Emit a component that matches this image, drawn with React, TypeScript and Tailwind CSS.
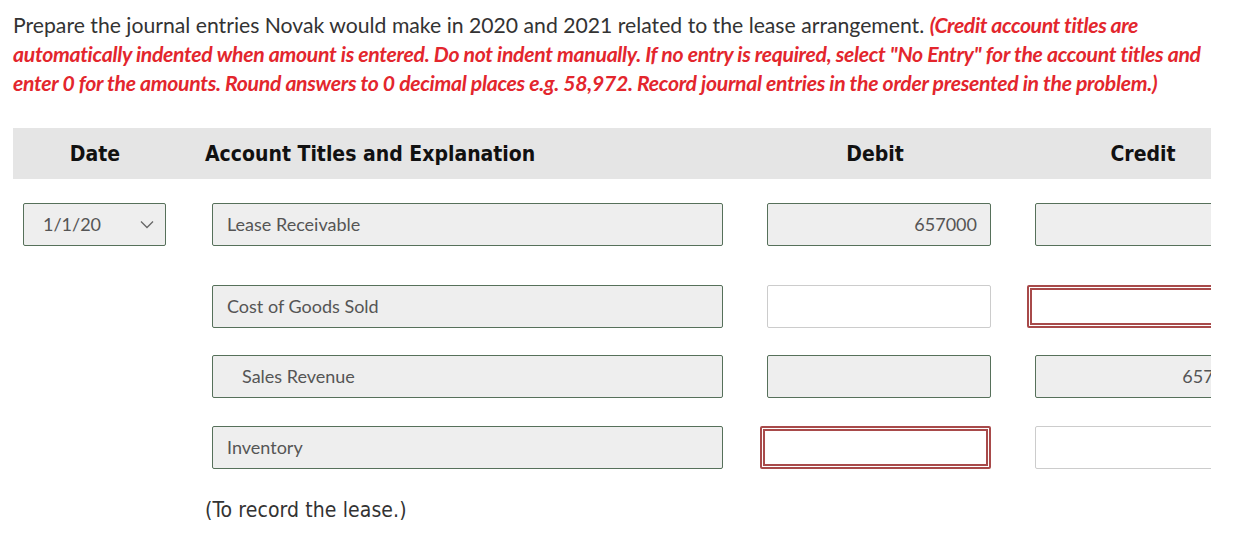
import React from 'react'

type Cell = { kind: 'filled' | 'empty' | 'error'; value?: string }

interface Row {
	date?: string
	account: string
	indent?: boolean
	debit: Cell
	credit: Cell
	top: string
}

const rows: Row[] = [
	{
		date: '1/1/20',
		account: 'Lease Receivable',
		debit: { kind: 'filled', value: '657000' },
		credit: { kind: 'filled' },
		top: 'mt-[24px]',
	},
	{
		account: 'Cost of Goods Sold',
		debit: { kind: 'empty' },
		credit: { kind: 'error' },
		top: 'mt-[39px]',
	},
	{
		account: 'Sales Revenue',
		indent: true,
		debit: { kind: 'filled' },
		credit: { kind: 'filled', value: '657000' },
		top: 'mt-[27px]',
	},
	{
		account: 'Inventory',
		debit: { kind: 'error' },
		credit: { kind: 'empty' },
		top: 'mt-[28px]',
	},
]

const AmountBox: React.FC<{ cell: Cell; gap: string; gapError: string }> = ({
	cell,
	gap,
	gapError,
}) => {
	if (cell.kind === 'error') {
		return (
			<div
				className={`${gapError} h-[43px] w-[231px] shrink-0 rounded-[2px] border-[5px] border-double border-[#a84a4a] bg-white`}
			/>
		)
	}
	if (cell.kind === 'empty') {
		return (
			<div
				className={`${gap} h-[43px] w-[224px] shrink-0 rounded-[2px] border border-[#cccccc] bg-white`}
			/>
		)
	}
	return (
		<div
			className={`${gap} flex h-[43px] w-[224px] shrink-0 items-center justify-end rounded-[2px] border border-[#56705a] bg-[#eeeeee] pr-[13px] text-[18px] text-[#555555]`}
		>
			{cell.value}
		</div>
	)
}

const App: React.FC = () => {
	return (
		<div className="h-[542px] w-[1244px] overflow-hidden bg-white font-['Lato',sans-serif]">
			<p className="whitespace-nowrap pl-[13px] pt-[11px] text-[21.2px] leading-[29px] text-[#333333]">
				Prepare the journal entries Novak would make in 2020 and 2021 related
				to the lease arrangement.{' '}
				<span className="font-bold italic tracking-[-0.4px] text-[#e3262d]">
					(Credit account titles are
				</span>
				<br />
				<span className="font-bold italic tracking-[-0.3px] text-[#e3262d]">
					automatically indented when amount is entered. Do not indent manually.
					If no entry is required, select "No Entry" for the account titles and
					<br />
					enter 0 for the amounts. Round answers to 0 decimal places e.g.
					58,972. Record journal entries in the order presented in the problem.)
				</span>
			</p>

			<div className="ml-[13px] mt-[30px] w-[1198px] overflow-hidden">
				{/* header */}
				<div className="flex h-[51px] items-center bg-[#e5e5e5] pt-[2px] font-['DejaVu_Sans_Condensed','DejaVu_Sans',sans-serif] text-[21px] font-bold text-[#111111]">
					<div className="w-[164px] shrink-0 text-center">Date</div>
					<div className="ml-[28px] w-[540px] shrink-0">
						Account Titles and Explanation
					</div>
					<div className="w-[260px] shrink-0 text-center">Debit</div>
					<div className="w-[276px] shrink-0 text-center">Credit</div>
				</div>

				{rows.map((row, i) => (
					<div key={i} className={`${row.top} flex pl-[10px]`}>
						{row.date ? (
							<div className="flex h-[43px] w-[143px] shrink-0 items-center justify-between rounded-[2px] border border-[#56705a] bg-[#eeeeee] pl-[19px] pr-[11px] text-[18px] text-[#555555]">
								<span>{row.date}</span>
								<svg width="14" height="9" viewBox="0 0 14 9">
									<polyline
										points="1,1.5 7,7.5 13,1.5"
										fill="none"
										stroke="#666666"
										strokeWidth="1.3"
									/>
								</svg>
							</div>
						) : (
							<div className="w-[143px] shrink-0" />
						)}
						<div
							className={`ml-[46px] flex h-[43px] w-[511px] shrink-0 items-center rounded-[2px] border border-[#56705a] bg-[#eeeeee] text-[18px] text-[#555555] ${
								row.indent ? 'pl-[29px]' : 'pl-[14px]'
							}`}
						>
							{row.account}
						</div>
						<AmountBox cell={row.debit} gap="ml-[44px]" gapError="ml-[37px]" />
						<AmountBox cell={row.credit} gap="ml-[44px]" gapError="ml-[36px]" />
					</div>
				))}

				<p className="ml-[192px] mt-[29px] font-['DejaVu_Sans_Condensed','DejaVu_Sans',sans-serif] text-[21px] leading-[24px] tracking-[0.1px] text-[#333333]">
					(To record the lease.)
				</p>
			</div>
		</div>
	)
}

export default App
